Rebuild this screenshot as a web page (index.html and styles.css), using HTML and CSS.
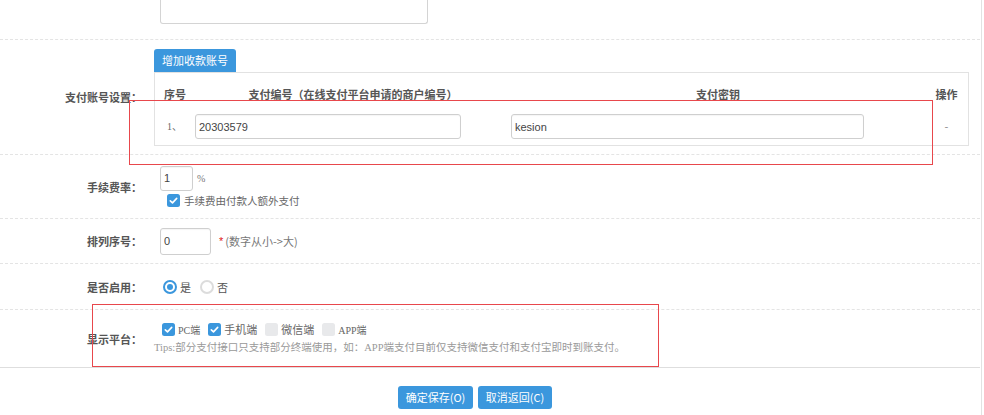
FILE: index.html
```html
<!DOCTYPE html>
<html lang="zh-CN">
<head>
<meta charset="utf-8">
<title>支付账号设置</title>
<link rel="stylesheet" href="styles.css">
</head>
<body>
<div class="page">
  <div class="row row-top">
    <div class="label"></div>
    <div class="content"><div class="textarea-stub"></div></div>
  </div>

  <div class="row row-acct">
    <div class="label">支付账号设置：</div>
    <div class="content">
      <button class="btn btn-add" type="button">增加收款账号</button>
      <div class="acct-table">
        <div class="th th-left">序号</div>
        <div class="th">支付编号（在线支付平台申请的商户编号）</div>
        <div class="th">支付密钥</div>
        <div class="th">操作</div>
        <div class="td td-no">1、</div>
        <div class="td"><input class="inp inp-code" type="text" value="20303579"></div>
        <div class="td"><input class="inp inp-key" type="text" value="kesion"></div>
        <div class="td td-op">-</div>
      </div>
    </div>
  </div>

  <div class="row row-fee">
    <div class="label">手续费率：</div>
    <div class="content">
      <div class="fee-line">
        <input class="inp inp-fee" type="text" value="1"><span class="pct">%</span>
      </div>
      <div class="chk-line">
        <span class="chk on"><svg viewBox="0 0 13 13" width="13" height="13"><rect width="13" height="13" rx="2.5" fill="#3b97dd"/><path d="M3.3 6.8 L5.5 8.9 L9.7 4.4" fill="none" stroke="#fff" stroke-width="1.6" stroke-linecap="round" stroke-linejoin="round"/></svg></span>
        <span class="chk-text">手续费由付款人额外支付</span>
      </div>
    </div>
  </div>

  <div class="row row-order">
    <div class="label">排列序号：</div>
    <div class="content inline">
      <input class="inp inp-order" type="text" value="0">
      <span class="req">*</span><span class="hint">(数字从小-&gt;大)</span>
    </div>
  </div>

  <div class="row row-enable">
    <div class="label">是否启用：</div>
    <div class="content inline">
      <span class="radio"><svg viewBox="0 0 14 14" width="14" height="14"><circle cx="7" cy="7" r="6" fill="#fff" stroke="#3b97dd" stroke-width="2"/><circle cx="7" cy="7" r="3" fill="#3b97dd"/></svg></span>
      <span class="opt">是</span>
      <span class="radio off"><svg viewBox="0 0 14 14" width="14" height="14"><circle cx="7" cy="7" r="6" fill="#fff" stroke="#dcdcdc" stroke-width="2"/></svg></span>
      <span class="opt">否</span>
    </div>
  </div>

  <div class="row row-platform">
    <div class="label">显示平台：</div>
    <div class="content">
      <div class="plat-line">
        <span class="chk"><svg viewBox="0 0 13 13" width="13" height="13"><rect width="13" height="13" rx="2.5" fill="#3b97dd"/><path d="M3.3 6.8 L5.5 8.9 L9.7 4.4" fill="none" stroke="#fff" stroke-width="1.6" stroke-linecap="round" stroke-linejoin="round"/></svg></span>
        <span class="plat-text">PC端</span>
        <span class="chk"><svg viewBox="0 0 13 13" width="13" height="13"><rect width="13" height="13" rx="2.5" fill="#3b97dd"/><path d="M3.3 6.8 L5.5 8.9 L9.7 4.4" fill="none" stroke="#fff" stroke-width="1.6" stroke-linecap="round" stroke-linejoin="round"/></svg></span>
        <span class="plat-text cjk">手机端</span>
        <span class="chk"><svg viewBox="0 0 13 13" width="13" height="13"><rect width="13" height="13" rx="2.5" fill="#e8e9eb"/></svg></span>
        <span class="plat-text cjk">微信端</span>
        <span class="chk"><svg viewBox="0 0 13 13" width="13" height="13"><rect width="13" height="13" rx="2.5" fill="#e8e9eb"/></svg></span>
        <span class="plat-text">APP端</span>
      </div>
      <div class="tips">Tips:部分支付接口只支持部分终端使用，如：APP端支付目前仅支持微信支付和支付宝即时到账支付。</div>
    </div>
  </div>

  <div class="footer">
    <button class="btn btn-save" type="button">确定保存(O)</button>
    <button class="btn btn-cancel" type="button">取消返回(C)</button>
  </div>

  <div class="mark mark-acct"></div>
  <div class="mark mark-platform"></div>
</div>
</body>
</html>
```

FILE: styles.css
```css
* { box-sizing: border-box; }

html, body {
  margin: 0;
  padding: 0;
  background: #fff;
}

body {
  font-family: "Noto Sans CJK SC", "Liberation Sans", sans-serif;
  font-size: 11px;
  color: #555;
  width: 984px;
  height: 415px;
  overflow: hidden;
}

.page {
  position: relative;
  width: 982px;
  height: 415px;
  border-right: 1px solid #e2e2e2;
}

.row {
  display: flex;
  align-items: center;
  border-bottom: 1px dashed #e4e4e4;
  margin-right: 1px;
}

.label {
  flex: none;
  width: 142px;
  text-align: right;
  font-weight: bold;
  font-size: 11px;
  color: #555;
  line-height: 16px;
}

.content {
  margin-left: 12px;
  flex: 1;
}

.content.inline {
  display: flex;
  align-items: center;
}

/* top cut-off textarea */
.row-top { height: 40px; align-items: flex-start; }
.textarea-stub {
  margin-left: 6px;
  width: 268px;
  height: 24px;
  border: 1px solid #d4d4d4;
  border-top: none;
  border-radius: 0 0 3px 3px;
}

/* account table */
.row-acct { height: 115px; }
.row-acct .content { padding-top: 9px; padding-bottom: 8px; margin-right: 12px; }

.btn {
  font-family: "Noto Sans CJK SC", "Liberation Sans", sans-serif;
  font-size: 11px;
  color: #fff;
  background: #3b97dd;
  border: none;
  border-radius: 3px;
  height: 23px;
  padding: 0;
  line-height: 23px;
  cursor: pointer;
}

.btn-add {
  display: block;
  width: 82px;
  border-radius: 3px 3px 0 0;
}

.acct-table {
  display: grid;
  grid-template-columns: 40px 316px 414px 1fr;
  grid-template-rows: 41px 31px;
  border: 1px solid #e2e2e2;
  width: 815px;
}

.th {
  font-weight: bold;
  color: #555;
  font-size: 11px;
  display: flex;
  align-items: center;
  justify-content: center;
}

.th-left { justify-content: flex-start; padding-left: 9px; }

.td {
  display: flex;
  align-items: flex-start;
}

.td-no {
  padding-left: 12px;
  line-height: 25px;
  font-family: "Liberation Serif", "Noto Sans CJK SC", serif;
  font-size: 10px;
  color: #666;
}

.td-op {
  justify-content: center;
  line-height: 25px;
  color: #888;
  font-size: 11px;
}

.inp {
  height: 25px;
  border: 1px solid #cfcfcf;
  border-radius: 3px;
  padding: 0 3px;
  font-family: "Liberation Sans", "Noto Sans CJK SC", sans-serif;
  font-size: 11px;
  color: #444;
  background: #fff;
  box-shadow: inset 0 1px 1px rgba(0,0,0,0.04);
  outline: none;
}

.inp-code { width: 266px; }
.inp-key { width: 353px; }

/* fee */
.row-fee { height: 64px; }
.fee-line { display: flex; align-items: center; padding-left: 6px; }
.inp-fee { width: 33px; }
.pct {
  margin-left: 4px;
  font-family: "Liberation Serif", serif;
  font-size: 10px;
  color: #777;
}
.chk-line {
  display: flex;
  align-items: center;
  margin-top: 3px;
  padding-left: 13px;
  height: 14px;
}
.chk { display: inline-flex; width: 13px; height: 13px; flex: none; }
.chk svg { display: block; }
.chk-text { margin-left: 4px; color: #666; font-size: 10.5px; line-height: 14px; }

/* order */
.row-order { height: 45px; }
.row-order .content { padding-left: 6px; }
.inp-order { width: 51px; height: 27px; }
.req { color: #e02020; margin-left: 8px; font-size: 11px; font-family: "Liberation Sans", sans-serif; }
.hint { color: #777; margin-left: 2px; font-size: 11px; }

/* enable */
.row-enable { height: 46px; }
.row-enable .content { padding-left: 9px; }
.radio { display: inline-flex; width: 14px; height: 14px; }
.radio svg { display: block; }
.opt { margin-left: 3px; color: #555; font-size: 11px; }
.radio.off { margin-left: 9px; }

/* platform */
.row-platform {
  height: 58px;
  border-bottom: 1px solid #dedede;
}
.plat-line {
  display: flex;
  align-items: center;
  padding-left: 8px;
  height: 14px;
}
.plat-text {
  margin-left: 3px;
  margin-right: 8px;
  color: #666;
  font-family: "Liberation Serif", "Noto Sans CJK SC", serif;
  font-size: 10px;
}
.plat-text.cjk { font-size: 11px; }
.tips {
  margin-top: 5px;
  color: #999;
  font-family: "Liberation Serif", "Noto Sans CJK SC", serif;
  font-size: 10.5px;
  line-height: 14px;
  white-space: nowrap;
}

/* footer */
.footer {
  display: flex;
  gap: 5px;
  padding-top: 18px;
  padding-left: 398px;
}
.btn-save { width: 75px; }
.btn-cancel { width: 74px; }

/* red annotation rectangles drawn over the screenshot */
.mark {
  position: absolute;
  border: 1px solid #e8474c;
  pointer-events: none;
}
.mark-acct { left: 129px; top: 100px; width: 804px; height: 65px; }
.mark-platform { left: 92px; top: 304px; width: 567px; height: 63px; }
```
